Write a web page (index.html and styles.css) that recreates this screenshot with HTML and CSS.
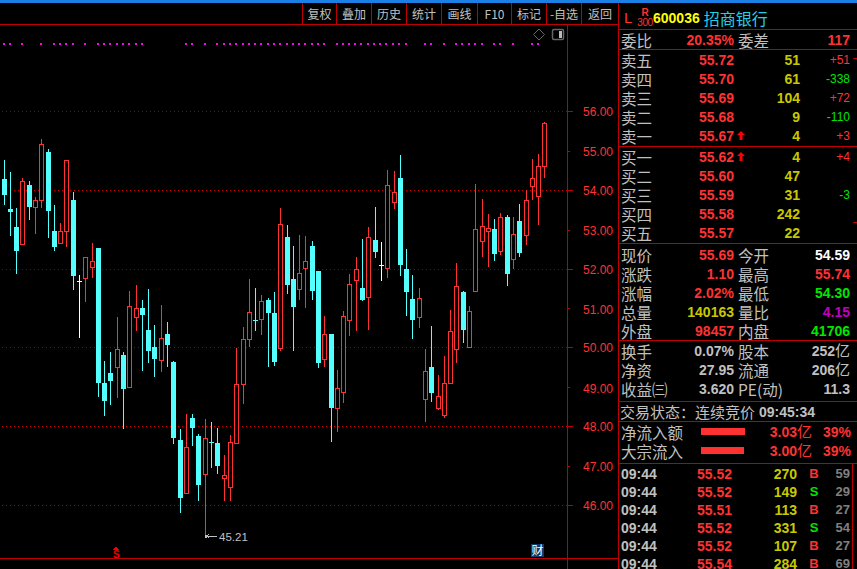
FILE: index.html
```html
<!DOCTYPE html>
<html lang="zh-CN">
<head>
  <meta charset="UTF-8" />
  <title>招商银行 600036</title>
  <link rel="stylesheet" href="styles.css">
</head>
<body>
  <div class="topbar"></div>
  <div class="screen">
    <div class="chart-pane">
      <nav class="toolbar">
        <span class="tool tool-narrow">复权</span>
        <span class="tool">叠加</span>
        <span class="tool">历史</span>
        <span class="tool">统计</span>
        <span class="tool tool-wide">画线</span>
        <span class="tool tool-narrow">F10</span>
        <span class="tool">标记</span>
        <span class="tool">-自选</span>
        <span class="tool tool-back">返回</span>
      </nav>
      <svg id="chart" class="chart" viewBox="0 25 618 544" shape-rendering="crispEdges"></svg>
    </div>

    <aside class="panel">
      <header class="stock-head">
        <span class="market">L</span>
        <span class="index-tag"><b>R</b><i>300</i></span>
        <span class="code">600036</span>
        <span class="stock-name">招商银行</span>
      </header>

      <section class="block block-ratio">
        <div class="quote">
          <span class="lbl">委比</span><span class="num red">20.35%</span><i></i>
          <span class="lbl">委差</span><span class="num red">117</span>
        </div>
      </section>

      <section class="block block-book">
        <div class="level"><span class="lbl">卖五</span><span class="num red">55.72</span><i></i><span class="num yellow">51</span><span class="delta red">+51</span></div>
        <div class="level"><span class="lbl">卖四</span><span class="num red">55.70</span><i></i><span class="num yellow">61</span><span class="delta green">-338</span></div>
        <div class="level"><span class="lbl">卖三</span><span class="num red">55.69</span><i></i><span class="num yellow">104</span><span class="delta red">+72</span></div>
        <div class="level"><span class="lbl">卖二</span><span class="num red">55.68</span><i></i><span class="num yellow">9</span><span class="delta green">-110</span></div>
        <div class="level"><span class="lbl">卖一</span><span class="num red">55.67</span>
          <svg class="up-arrow" viewBox="0 0 8 9"><path d="M4 0 8 4H5.500V9H2.500V4H0Z"/></svg>
          <span class="num yellow">4</span><span class="delta red">+3</span></div>
      </section>

      <section class="block block-book">
        <div class="level"><span class="lbl">买一</span><span class="num red">55.62</span>
          <svg class="up-arrow" viewBox="0 0 8 9"><path d="M4 0 8 4H5.500V9H2.500V4H0Z"/></svg>
          <span class="num yellow">4</span><span class="delta red">+4</span></div>
        <div class="level"><span class="lbl">买二</span><span class="num red">55.60</span><i></i><span class="num yellow">47</span><span class="delta"></span></div>
        <div class="level"><span class="lbl">买三</span><span class="num red">55.59</span><i></i><span class="num yellow">31</span><span class="delta green">-3</span></div>
        <div class="level"><span class="lbl">买四</span><span class="num red">55.58</span><i></i><span class="num yellow">242</span><span class="delta"></span></div>
        <div class="level"><span class="lbl">买五</span><span class="num red">55.57</span><i></i><span class="num yellow">22</span><span class="delta"></span></div>
      </section>

      <section class="block block-stats">
        <div class="quote"><span class="lbl">现价</span><span class="num red">55.69</span><i></i><span class="lbl">今开</span><span class="num white">54.59</span></div>
        <div class="quote"><span class="lbl">涨跌</span><span class="num red">1.10</span><i></i><span class="lbl">最高</span><span class="num red">55.74</span></div>
        <div class="quote"><span class="lbl">涨幅</span><span class="num red">2.02%</span><i></i><span class="lbl">最低</span><span class="num green">54.30</span></div>
        <div class="quote"><span class="lbl">总量</span><span class="num yellow">140163</span><i></i><span class="lbl">量比</span><span class="num purple">4.15</span></div>
        <div class="quote"><span class="lbl">外盘</span><span class="num red">98457</span><i></i><span class="lbl">内盘</span><span class="num green">41706</span></div>
      </section>

      <section class="block block-finance">
        <div class="quote"><span class="lbl">换手</span><span class="num gray">0.07%</span><i></i><span class="lbl">股本</span><span class="num gray">252<em>亿</em></span></div>
        <div class="quote"><span class="lbl">净资</span><span class="num gray">27.95</span><i></i><span class="lbl">流通</span><span class="num gray">206<em>亿</em></span></div>
        <div class="quote"><span class="lbl">收益㈢</span><span class="num gray">3.620</span><i></i><span class="lbl">PE(动)</span><span class="num gray">11.3</span></div>
      </section>

      <section class="block block-status">
        <span class="lbl">交易状态：连续竞价</span><span class="num gray">09:45:34</span>
      </section>

      <section class="block block-flow">
        <div class="flow"><span class="lbl">净流入额</span><span class="flow-bar flow-bar-a"></span><span class="num red">3.03<em>亿</em></span><span class="num red">39%</span></div>
        <div class="flow"><span class="lbl">大宗流入</span><span class="flow-bar flow-bar-b"></span><span class="num red">3.00<em>亿</em></span><span class="num red">39%</span></div>
      </section>

      <section class="trades">
        <div class="trade"><span class="num gray">09:44</span><span class="num red">55.52</span><span class="num yellow">270</span><span class="side red">B</span><span class="count">59</span></div>
        <div class="trade"><span class="num gray">09:44</span><span class="num red">55.52</span><span class="num yellow">149</span><span class="side green">S</span><span class="count">29</span></div>
        <div class="trade"><span class="num gray">09:44</span><span class="num red">55.51</span><span class="num yellow">113</span><span class="side red">B</span><span class="count">27</span></div>
        <div class="trade"><span class="num gray">09:44</span><span class="num red">55.52</span><span class="num yellow">331</span><span class="side green">S</span><span class="count">54</span></div>
        <div class="trade"><span class="num gray">09:44</span><span class="num red">55.52</span><span class="num yellow">107</span><span class="side red">B</span><span class="count">27</span></div>
        <div class="trade"><span class="num gray">09:44</span><span class="num red">55.54</span><span class="num yellow">284</span><span class="side red">B</span><span class="count">69</span></div>
      </section>
    </aside>
  </div>
  <script src="app.js"></script>
</body>
</html>
```

FILE: styles.css
```css
html, body {
  margin: 0;
  height: 100%;
  overflow: hidden;
  background-color: #000;
}
body {
  font-family: "Noto Sans CJK SC", "Liberation Sans", sans-serif;
  color: #c0c0c0;
}
.topbar {
  height: 3px;
  background-color: #1c7fe4;
}
.screen {
  display: flex;
  height: 566px;
}

/* left side */
.chart-pane {
  width: 618px;
  flex: none;
  display: flex;
  flex-direction: column;
  border-right: 1px solid #c00000;
}
.toolbar {
  display: flex;
  justify-content: flex-end;
  height: 21px;
  flex: none;
  border-bottom: 1px solid #c00000;
}
.tool {
  width: 34px;
  flex: none;
  border-left: 1px solid #c00000;
  font-size: 12px;
  line-height: 21px;
  text-align: center;
  white-space: nowrap;
}
.tool-narrow { width: 33px; }
.tool-wide { width: 35px; }
.tool-back { width: 36px; }
.chart {
  display: block;
  width: 618px;
  height: 544px;
}
.axis-label {
  font-family: "Liberation Sans", sans-serif;
  font-size: 12px;
  fill: #ff3232;
}
.low-label {
  font-family: "Liberation Sans", sans-serif;
  font-size: 11.5px;
  fill: #c0c0c0;
}
.mark-s {
  font-family: "Liberation Sans", sans-serif;
  font-size: 10px;
  font-weight: bold;
  fill: #f00000;
}
.mark-cai {
  font-size: 12px;
  fill: #fff;
}

/* right side */
.panel {
  flex: 1;
  min-width: 0;
  display: flex;
  flex-direction: column;
  line-height: 18px;
  /* scale marks along the outer edge */
  background:
    linear-gradient(#c00000, #c00000) right 0 top 55px / 4px 1px no-repeat,
    linear-gradient(#c00000, #c00000) right 0 top 219px / 4px 1px no-repeat;
}
.stock-head {
  height: 23px;
  flex: none;
  display: flex;
  align-items: center;
  padding: 3px 0 0 5px;
  border-bottom: 1px solid #c00000;
}
.market {
  width: 13px;
  font-family: "Liberation Sans", sans-serif;
  font-size: 15px;
  color: #ff3232;
}
.index-tag {
  width: 16px;
  display: flex;
  flex-direction: column;
  align-items: center;
  font-family: "Liberation Sans", sans-serif;
  color: #ff3232;
  line-height: 10px;
}
.index-tag b { font-size: 10px; }
.index-tag i { font-size: 10px; font-style: normal; letter-spacing: -0.4px; }
.code {
  font-family: "Liberation Sans", sans-serif;
  font-size: 14px;
  font-weight: bold;
  color: #ffff00;
  margin-right: 4px;
}
.stock-name {
  font-size: 16px;
  color: #22cfe8;
}
.block {
  flex: none;
  border-bottom: 1px solid #c00000;
}
.block-ratio { height: 19px; }
.block-book { height: 96px; }
.block-stats { height: 95px; padding-top: 1px; }
.block-finance { height: 60px; }
.block-status {
  height: 19px;
  display: flex;
  align-items: center;
  padding-left: 1px;
}
.block-status .lbl { width: 139px; font-size: 15px; }
.block-flow { height: 41px; }

.lbl {
  font-size: 15.5px;
  white-space: nowrap;
}
.num {
  font-family: "Liberation Sans", sans-serif;
  font-size: 14px;
  font-weight: bold;
  text-align: right;
  white-space: nowrap;
}
.num em {
  font-family: "Noto Sans CJK SC", sans-serif;
  font-size: 15px;
  font-style: normal;
  font-weight: normal;
}
.red { color: #ff3232; }
.green { color: #00e600; }
.yellow { color: #c8c800; }
.white { color: #fff; }
.gray { color: #c0c0c0; }
.purple { color: #c000c0; }

.quote, .level {
  display: grid;
  align-items: center;
  height: 19px;
  padding-left: 2px;
}
.quote {
  grid-template-columns: 40px 73px 4px 40px 72px;
}
.level {
  grid-template-columns: 40px 73px 12px 54px 50px;
}
.up-arrow {
  width: 8px;
  height: 9px;
  margin-left: 3px;
  fill: #ff0000;
}
.delta {
  font-family: "Liberation Sans", sans-serif;
  font-size: 12px;
  text-align: right;
}
.flow {
  display: grid;
  grid-template-columns: 80px 50px 61px 39px;
  align-items: center;
  height: 19px;
  padding-left: 2px;
}
.flow-bar {
  height: 7px;
  background-color: #ff3232;
}
.flow-bar-a { width: 44px; }
.flow-bar-b { width: 43px; }

.trades {
  flex: 1;
  min-height: 0;
  width: 233px;
  padding-top: 1px;
  border-right: 1px solid #c00000;
}
.trade {
  display: grid;
  grid-template-columns: 75px 36px 65px 34px 19px;
  align-items: center;
  height: 18px;
  padding-left: 2px;
}
.trade .num:first-child { text-align: left; }
.side {
  font-family: "Liberation Sans", sans-serif;
  font-size: 13px;
  font-weight: bold;
  text-align: center;
}
.count {
  font-family: "Liberation Sans", sans-serif;
  font-size: 13px;
  font-weight: bold;
  color: #808080;
  text-align: right;
}
```

FILE: app.js
```js
// x, high, body top, body bottom, low, kind (r = up, c = down, w = flat white, d = flat cyan)
const candles = [
  [4,160,179,195,205,'c'],[10,172,209,212,236,'c'],[16,208,227,251,274,'c'],[22,178,181,245,245,'r'],
  [29,181,185,207,220,'c'],[35,197,200,208,234,'r'],[41,139,144,201,208,'r'],[48,149,152,211,238,'c'],
  [54,205,231,247,251,'c'],[60,223,231,244,244,'r'],[66,160,160,232,247,'r'],[73,192,200,276,290,'c'],
  [79,275,281,281,338,'w'],[85,257,257,279,302,'r'],[92,243,261,268,278,'r'],[98,248,248,383,397,'c'],
  [104,361,383,401,416,'c'],[110,352,373,381,405,'c'],[117,317,349,368,398,'r'],[123,352,355,389,429,'c'],
  [129,291,306,388,388,'r'],[136,285,308,318,331,'r'],[142,300,308,315,371,'c'],[148,289,330,351,363,'c'],
  [154,325,347,359,377,'c'],[161,305,338,361,372,'r'],[167,322,334,345,367,'c'],[173,361,362,438,444,'c'],
  [180,429,440,498,513,'c'],[186,414,447,494,494,'r'],[192,414,418,428,446,'c'],[198,434,436,485,501,'c'],
  [205,419,438,475,536,'r'],[211,422,442,442,468,'d'],[217,428,443,466,474,'c'],[224,455,475,479,501,'r'],
  [230,435,442,488,501,'r'],[236,348,384,444,444,'r'],[243,327,339,385,404,'r'],[249,279,312,340,347,'r'],
  [255,288,320,320,331,'d'],[261,295,301,320,335,'r'],[268,298,300,313,367,'c'],[274,292,313,362,366,'c'],
  [280,208,224,349,351,'r'],[287,225,237,285,294,'c'],[293,246,279,307,351,'c'],[299,235,273,290,300,'r'],
  [305,236,261,269,308,'r'],[312,241,246,291,300,'c'],[318,271,271,363,368,'c'],[324,316,334,360,367,'r'],
  [331,334,334,408,442,'c'],[337,370,388,409,432,'r'],[343,311,316,393,403,'r'],[349,274,284,321,336,'r'],
  [356,257,269,281,331,'r'],[362,239,288,300,301,'c'],[368,227,237,298,330,'r'],[375,207,240,252,258,'c'],
  [381,242,265,265,281,'w'],[387,170,185,269,278,'r'],[394,171,192,203,209,'r'],[400,155,178,265,276,'c'],
  [406,249,269,292,316,'c'],[412,275,299,320,339,'c'],[419,288,298,318,328,'r'],[425,349,371,400,422,'r'],
  [431,326,367,393,402,'c'],[438,375,396,409,410,'r'],[444,356,383,416,418,'r'],[450,310,331,384,384,'r'],
  [456,263,286,350,363,'r'],[463,291,292,330,343,'c'],[469,306,311,348,348,'r'],[475,184,229,292,292,'r'],
  [482,199,226,242,257,'r'],[488,214,228,232,267,'r'],[494,219,229,254,261,'c'],[500,213,217,252,255,'r'],
  [507,215,217,274,286,'c'],[513,217,234,260,269,'r'],[519,204,221,253,257,'c'],[526,190,200,236,245,'r'],
  [532,159,178,187,200,'r'],[538,154,166,197,225,'r'],[544,122,123,167,178,'r']
];

// signal row above the candles
const dots = [4,10,22,41,54,60,66,73,85,98,104,110,117,123,129,136,142,
  186,192,205,217,224,230,236,243,249,255,261,268,274,280,287,293,299,305,312,318,324,
  337,343,349,355,361,368,374,380,386,393,399,406,425,431,444,456,462,469,475,482,494,500,513,532,538];

const RED = '#ff3232', CYAN = '#54ffff', LINE = '#c00000';
// price grid: the 54 and 48 levels are drawn stronger
const grid = [[111,'#8c0000'],[190,'#d00000'],[269,'#8c0000'],[347,'#a00000'],[426,'#d00000'],[505,'#a00000']];
const ticks = [111, 151, 190, 230, 269, 308, 347, 387, 426, 466, 505];
const labels = [[56,112],[55,152],[54,191],[53,231],[52,270],[51,310],[50,348],[49,389],[48,427],[47,467],[46,506]];

let out = '';
const rect = (x, y, w, h, fill) => `<rect x="${x}" y="${y}" width="${w}" height="${h}" fill="${fill}"/>`;

grid.forEach(([y, color]) => {
  out += `<line x1="2" x2="567" y1="${y + 0.5}" y2="${y + 0.5}" stroke="${color}" stroke-dasharray="1 3"/>`;
  out += rect(567, y, 6, 1, LINE);
});
ticks.forEach(y => { out += rect(567, y, 3, 1, LINE); });

dots.forEach(x => { out += rect(x - 1, 43, 2, 2, '#ff00ff'); });

candles.forEach(([x, hi, top, bot, lo, kind]) => {
  if (kind === 'w' || kind === 'd') {
    const c = kind === 'w' ? '#fff' : CYAN;
    out += rect(x, hi, 1, lo - hi, c) + rect(x - 2, top, 5, 1, c);
    return;
  }
  const c = kind === 'r' ? RED : CYAN;
  out += rect(x, hi, 1, top - hi, c) + rect(x, bot, 1, lo - bot, c);
  if (kind === 'r') {
    out += `<rect x="${x - 1.5}" y="${top + 0.5}" width="4" height="${bot - top - 1}" fill="#000" stroke="${c}"/>`;
  } else {
    out += rect(x - 2, top, 5, bot - top, c);
  }
});

// frame lines and axis
out += rect(567, 25, 1, 544, LINE) + rect(0, 558, 618, 1, LINE);
labels.forEach(([v, y]) => {
  out += `<text class="axis-label" x="583" y="${y + 4}" shape-rendering="auto">${v}.00</text>`;
});

// lowest price marker
out += rect(205, 535, 2, 3, '#c0c0c0') + rect(207, 536, 10, 1, '#c0c0c0');
out += `<path d="M209 534 207 536 209 538" fill="none" stroke="#c0c0c0"/>`;
out += `<text class="low-label" x="219" y="541" shape-rendering="auto">45.21</text>`;

// dividend and report flags on the time axis
out += `<path d="M116 546 119 550H113Z" fill="#f00000"/>`;
out += `<text class="mark-s" x="113" y="557.5" shape-rendering="auto">S</text>`;
out += rect(531, 544, 13, 13, '#0c3a6c');
out += `<text class="mark-cai" x="531.5" y="555" shape-rendering="auto">财</text>`;

// corner icons
out += `<path d="M539 29 544.500 34.500 539 40 533.500 34.500Z" fill="none" stroke="#666" shape-rendering="auto"/>`;
out += `<rect x="552.500" y="29.500" width="11" height="10" rx="1.500" fill="#000" stroke="#666" stroke-width="1.500" shape-rendering="auto"/>`;
out += rect(559, 31, 3, 7, '#bbb');

document.getElementById('chart').innerHTML = out;
```
